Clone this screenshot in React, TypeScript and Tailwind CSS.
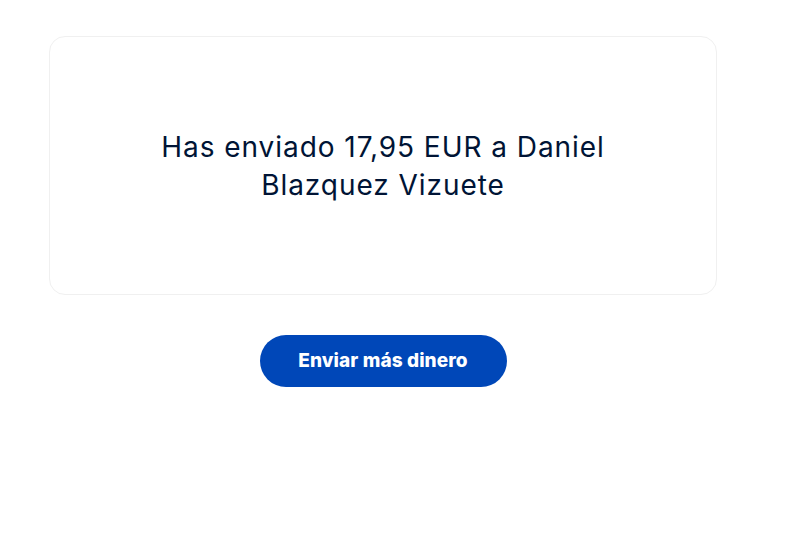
import React from 'react';

function App() {
  return (
    <div className="min-h-screen bg-white" style={{ fontFamily: 'Inter, "Noto Sans", sans-serif' }}>
      <main className="ml-[49px] w-[668px] pt-[36px]">
        <section className="flex h-[259px] items-center justify-center rounded-[16px] border border-[#f0f0f0] bg-white px-10">
          <h1 className="max-w-[500px] text-center text-[28px] leading-[38px] font-normal tracking-[0.95px] text-[#001435]">
            Has enviado 17,95 EUR a Daniel Blazquez Vizuete
          </h1>
        </section>
        <div className="mt-[40px] flex justify-center">
          <button className="h-[52px] w-[247px] rounded-full bg-[#0047b8] text-[19px] font-extrabold tracking-[0.1px] text-white">
            Enviar más dinero
          </button>
        </div>
      </main>
    </div>
  );
}

export default App;
